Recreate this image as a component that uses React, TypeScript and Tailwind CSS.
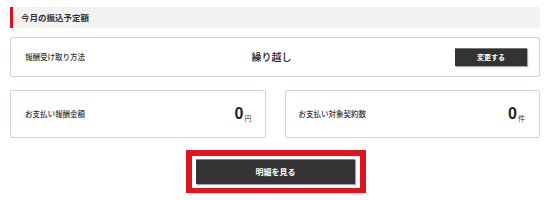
import React from "react";

const jp = "font-['Noto_Sans_CJK_JP',sans-serif]";

export default function App() {
  return (
    <div className={`w-[550px] h-[200px] bg-white px-[10px] pt-[7px] text-[#333] ${jp}`}>
      <div className="h-[21px] bg-[#f2f2f2] border-l-[3px] border-[#d7111b] flex items-center pl-[8px] text-[8.5px] font-bold leading-none">
        今月の振込予定額
      </div>

      <div className="mt-[9px] h-[40px] border border-[#c9d6e4] rounded-[2px] flex items-center pl-[14px] pr-[12px]">
        <div className="w-[186px] text-[7.5px] font-medium leading-none">報酬受け取り方法</div>
        <div className="w-[121px] text-center text-[10px] font-medium leading-none text-[#222]">繰り越し</div>
        <div className="flex-1" />
        <button className="w-[72px] h-[18px] bg-[#333] border-t border-[#777] shadow-[1px_1px_1px_rgba(0,0,0,0.35)] text-white text-[7px] font-bold leading-none flex items-center justify-center">
          変更する
        </button>
      </div>

      <div className="mt-[13px] grid grid-cols-2 gap-[19px]">
        <div className="h-[48px] border border-[#c9d6e4] rounded-[2px] flex items-center justify-between pl-[14px] pr-[13px]">
          <div className="text-[7.5px] font-medium leading-none">お支払い報酬金額</div>
          <div className="flex items-end leading-none">
            <span className="font-['Liberation_Sans',Arial,sans-serif] font-bold text-[16px] text-[#222] leading-none">0</span>
            <span className="text-[7px] ml-[1px] leading-none">円</span>
          </div>
        </div>
        <div className="h-[48px] border border-[#c9d6e4] rounded-[2px] flex items-center justify-between pl-[13px] pr-[14px]">
          <div className="text-[7.5px] font-medium leading-none">お支払い対象契約数</div>
          <div className="flex items-end leading-none">
            <span className="font-['Liberation_Sans',Arial,sans-serif] font-bold text-[16px] text-[#222] leading-none">0</span>
            <span className="text-[7px] ml-[1px] leading-none">件</span>
          </div>
        </div>
      </div>

      <div className="mt-[12px] flex justify-center pl-[2px]">
        <div className="border-[6px] border-b-[5px] border-[#e0141e] pl-[4px] pr-[5px] pt-[3px] pb-[4px]">
          <button className="w-[159px] h-[25px] bg-[#333] border-t border-[#888] shadow-[1px_1px_1px_rgba(0,0,0,0.35)] text-white text-[8px] font-bold leading-none flex items-center justify-center">
            明細を見る
          </button>
        </div>
      </div>
    </div>
  );
}
